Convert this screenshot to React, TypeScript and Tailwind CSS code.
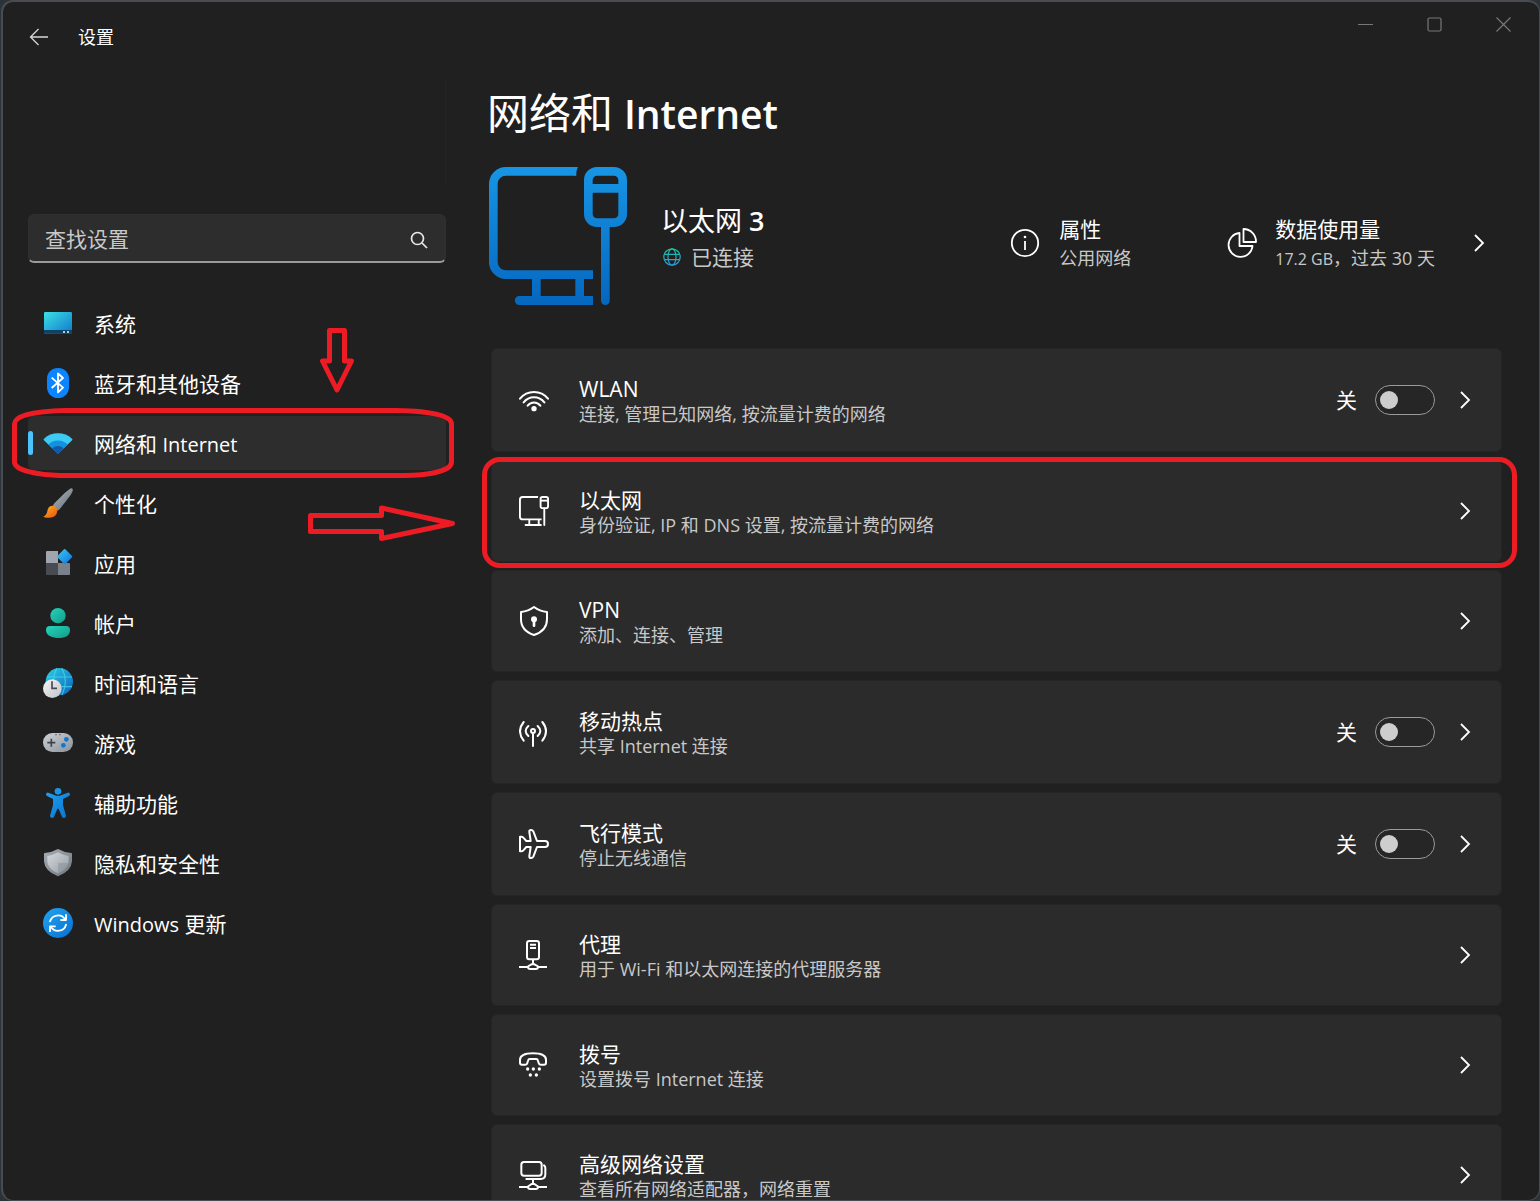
import React from "react";

type IconProps = { className?: string };

function EthernetIcon({ className, hero = false }: IconProps & { hero?: boolean }) {
  return (
    <svg className={className} viewBox="57 261 414 414" fill="none" stroke={hero ? "url(#ethernet)" : "currentColor"} strokeWidth="26" aria-hidden="true">
      {hero && (
        <defs>
          <linearGradient id="ethernet" gradientUnits="userSpaceOnUse" x1="57" y1="261" x2="57" y2="675">
            <stop offset="0" stopColor="#1795e4" />
            <stop offset="1" stopColor="#0567bf" />
          </linearGradient>
        </defs>
      )}
      <path d="M369 584H108a38 38 0 0 1-38-38V312a38 38 0 0 1 38-38H319" />
      <path d="M199 590V655M329 590V655" />
      <path fill={hero ? "url(#ethernet)" : "currentColor"} stroke="none" d="M369 648v27H148a13 13 0 0 1 0-27zM314 261h10q-7 12-7 26h-3z" />
      <path d="M406 435V662" strokeLinecap="round" />
      <rect x="355" y="274" width="103" height="154" rx="26" />
      <path d="M360 325H453" />
    </svg>
  );
}

function Chevron() {
  return (
    <svg className="h-5 w-5" viewBox="0 0 20 20" fill="none" stroke="currentColor" strokeWidth="1.8" aria-hidden="true">
      <path d="M6 2l8 8-8 8" />
    </svg>
  );
}

function Glyph({ box, children }: { box: string; children: React.ReactNode }) {
  return (
    <svg className="h-[30px] w-[30px] shrink-0" viewBox={box} fill="none" stroke="currentColor" strokeWidth="6" aria-hidden="true">
      {children}
    </svg>
  );
}

const wlanIcon = (
  <Glyph box="117 132 90 90">
    <circle cx="162" cy="203" r="8" fill="currentColor" stroke="none" />
    <path strokeLinecap="round" d="M120 173A54 54 0 0 1 204 173M131 184A39 39 0 0 1 193 184M143 194A24 24 0 0 1 181 194" />
  </Glyph>
);
const vpnIcon = (
  <Glyph box="117 798 90 90">
    <path strokeLinejoin="round" d="M162 801Q145 814 123 816V838C123 862 140 878 162 885C184 878 201 862 201 838V816Q179 814 162 801Z" />
    <circle cx="162" cy="838" r="9" fill="currentColor" stroke="none" />
    <path d="M162 840V857" strokeWidth="8" strokeLinecap="round" />
  </Glyph>
);
const hotspotIcon = (
  <Glyph box="117 111 90 90">
    <circle cx="159" cy="153" r="6" />
    <path strokeLinecap="round" d="M159 161V198M145 138Q129 153 145 168M173 138Q189 153 173 168M131 126Q109 153 131 182M187 126Q209 153 187 182" />
  </Glyph>
);
const planeIcon = (
  <Glyph box="117 447 90 90">
    <path strokeLinejoin="round" d="M171 483H195a9 9 0 0 1 0 18H171L160 530q-2 4-7 4q-6 0-5-6L152 501H139L130 511q-3 3-6 3h-4V470h4q3 0 6 3L139 483H152L148 456q-1-6 5-6q5 0 7 4Z" />
  </Glyph>
);
const proxyIcon = (
  <Glyph box="117 780 90 90">
    <rect x="141" y="783" width="36" height="55" rx="7" />
    <path d="M150 794H168M150 804H168M159 838V853M117 861H144M174 861H201" />
    <path d="M144 861q0 6 7 6h16q7 0 7-6q0-3-5-5l-6-3h-8l-6 3q-5 2-5 5Z" />
  </Glyph>
);
const dialIcon = (
  <Glyph box="117 120 90 90">
    <path strokeLinejoin="round" d="M120 150C120 136 138 130 159 130S198 136 198 150V158q0 6-6 6h-10q-5 0-6-5l-2-7q-1-5-6-5h-18q-5 0-6 5l-2 7q-1 5-6 5h-10q-6 0-6-6Z" />
    <g fill="currentColor" stroke="none">
      <circle cx="143" cy="177" r="5" />
      <circle cx="160" cy="177" r="5" />
      <circle cx="178" cy="177" r="5" />
      <circle cx="151" cy="195" r="5" />
      <circle cx="169" cy="195" r="5" />
    </g>
  </Glyph>
);
const advancedIcon = (
  <Glyph box="117 451 90 90">
    <rect x="124" y="457" width="61" height="41" rx="8" />
    <path strokeLinecap="round" d="M192 467q4 3 4 8V494q0 14-14 14H139" />
    <path d="M159 508V520M117 532H144M174 532H201" />
    <path d="M144 532q0 6 7 6h16q7 0 7-6q0-3-5-5l-6-4h-8l-6 4q-5 2-5 5Z" />
  </Glyph>
);

function Tile({ box, children }: { box: string; children: React.ReactNode }) {
  return (
    <svg className="h-[30px] w-[30px] shrink-0" viewBox={box} fill="none" aria-hidden="true">
      {children}
    </svg>
  );
}

function Gradient({ id, from, to }: { id: string; from: string; to: string }) {
  return (
    <linearGradient id={id} x1="0" y1="0" x2="1" y2="1">
      <stop offset="0" stopColor={from} />
      <stop offset="1" stopColor={to} />
    </linearGradient>
  );
}

const navItems: { key: string; label: React.ReactNode; icon: React.ReactNode }[] = [
  {
    key: "system",
    label: "系统",
    icon: (
      <Tile box="129 54 90 90">
        <Gradient id="sys" from="#3be0e6" to="#1077cb" />
        <rect x="132" y="66" width="84" height="65" rx="4" fill="url(#sys)" />
        <path d="M132 120h84v7q0 4-4 4h-76q-4 0-4-4z" fill="#0f4266" />
        <path d="M189 123h6v6h-6zM201 123h6v6h-6z" fill="#a9cde0" />
      </Tile>
    ),
  },
  {
    key: "bluetooth",
    label: "蓝牙和其他设备",
    icon: (
      <Tile box="129 234 90 90">
        <rect x="141" y="234" width="66" height="90" rx="32" fill="#0a84ff" />
        <path d="M155 263L189 293L174 307V250L189 264L155 294" stroke="#fff" strokeWidth="5.5" strokeLinejoin="round" />
      </Tile>
    ),
  },
  {
    key: "network",
    label: (
      <>
        网络和 <span className="text-xl leading-none">Internet</span>
      </>
    ),
    icon: (
      <Tile box="129 414 90 90">
        <path d="M174 491L131 450Q130 448 132 446A62 62 0 0 1 216 446Q218 448 217 450Z" fill="#3ccbf4" />
        <path d="M174 491L145 463A42 42 0 0 1 203 463Z" fill="#1590e0" />
        <path d="M174 491Q172 491 170 489L157 475A25 25 0 0 1 191 475L178 489Q176 491 174 491Z" fill="#0f5bab" />
      </Tile>
    ),
  },
  {
    key: "personalization",
    label: "个性化",
    icon: (
      <Tile box="39 54 90 90">
        <Gradient id="handle" from="#b4bcc6" to="#5f6871" />
        <Gradient id="bristle" from="#ffb724" to="#e9500f" />
        <path d="M119 57Q125 52 128 57Q130 63 122 75L89 118Q84 123 78 121L69 108Q70 102 74 99L105 68Z" fill="url(#handle)" />
        <path d="M40 140Q50 136 52 124Q54 107 68 107Q82 109 82 122Q80 143 58 143Q45 144 40 140Z" fill="url(#bristle)" />
      </Tile>
    ),
  },
  {
    key: "apps",
    label: "应用",
    icon: (
      <Tile box="39 234 90 90">
        <Gradient id="diamond" from="#3ccbf4" to="#0c70de" />
        <path d="M51 243h33v36H48v-33q0-3 3-3z" fill="#a0a6b0" />
        <path d="M48 279h36v36H51q-3 0-3-3z" fill="#484c52" />
        <path d="M84 279h33q3 0 3 3v30q0 3-3 3H84z" fill="#7a818b" />
        <path d="M102 238q2-2 4 0l20 20q2 2 0 4l-20 20q-2 2-4 0l-20-20q-2-2 0-4z" fill="url(#diamond)" />
      </Tile>
    ),
  },
  {
    key: "accounts",
    label: "帐户",
    icon: (
      <Tile box="39 414 90 90">
        <Gradient id="person" from="#27d3bd" to="#109c87" />
        <circle cx="84" cy="437" r="23" fill="url(#person)" />
        <path d="M48 480q0-12 12-12h48q12 0 12 12q0 24-36 24s-36 0-36-24z" fill="url(#person)" />
      </Tile>
    ),
  },
  {
    key: "time",
    label: "时间和语言",
    icon: (
      <Tile box="39 594 90 90">
        <Gradient id="earth" from="#2fd0e4" to="#0c62bd" />
        <Gradient id="clock" from="#f4f5f6" to="#bfc3c8" />
        <circle cx="88" cy="635" r="41" fill="url(#earth)" />
        <path d="M51 621H126M48 650H126M80 595Q60 635 80 675M96 595Q116 635 96 675" stroke="#48d8ee" strokeWidth="3.5" opacity=".75" />
        <circle cx="67" cy="656" r="28" fill="url(#clock)" />
        <path d="M66 634V655H81" stroke="#45494e" strokeWidth="5" />
      </Tile>
    ),
  },
  {
    key: "gaming",
    label: "游戏",
    icon: (
      <Tile box="39 54 90 90">
        <Gradient id="pad" from="#cfd3d8" to="#8a9199" />
        <rect x="39" y="69" width="90" height="57" rx="28" fill="url(#pad)" />
        <path d="M64 86V110M52 98H76" stroke="#3f444a" strokeWidth="5" />
        <circle cx="109" cy="88" r="7" fill="#0c78d4" />
        <circle cx="100" cy="106" r="7" fill="#0c78d4" />
        <path d="M76 72h4v4h-4zM88 72h4v4h-4z" fill="#565b61" />
      </Tile>
    ),
  },
  {
    key: "accessibility",
    label: "辅助功能",
    icon: (
      <Tile box="39 234 90 90">
        <Gradient id="figure" from="#1fa0ee" to="#0872d0" />
        <circle cx="84" cy="244" r="10" fill="#1995e6" />
        <path d="M55 248L75 256Q84 259 93 256L113 248Q119 247 120 253Q120 256 117 258L99 267V286L108 317Q108 323 103 324Q98 324 96 320L86 297Q84 294 82 297L72 320Q70 324 65 324Q60 323 60 317L69 286V267L51 258Q48 256 48 253Q49 247 55 248Z" fill="url(#figure)" />
      </Tile>
    ),
  },
  {
    key: "privacy",
    label: "隐私和安全性",
    icon: (
      <Tile box="39 414 90 90">
        <Gradient id="shield" from="#a7adb4" to="#70777f" />
        <Gradient id="plate" from="#d5d9dd" to="#959ca4" />
        <path d="M84 417Q104 428 124 429Q126 429 126 432V454Q124 484 84 499Q44 484 42 454V432Q42 429 44 429Q64 428 84 417Z" fill="url(#shield)" />
        <path d="M84 427Q100 436 116 438V456Q113 478 84 490Q55 478 52 456V438Q68 436 84 427Z" fill="url(#plate)" />
        <path d="M84 459H116Q112 480 84 490Z" fill="#7f868e" opacity=".4" />
      </Tile>
    ),
  },
  {
    key: "update",
    label: (
      <>
        <span className="text-xl leading-none">Windows</span> 更新
      </>
    ),
    icon: (
      <Tile box="39 594 90 90">
        <Gradient id="update" from="#1fa5f2" to="#0a6fd0" />
        <circle cx="84" cy="639" r="45" fill="url(#update)" />
        <path d="M60 634A25 25 0 0 1 105 628M108 644A25 25 0 0 1 63 651" stroke="#fff" strokeWidth="5.5" strokeLinecap="round" />
        <path d="M108 613V630H91M60 666V649H77" stroke="#fff" strokeWidth="5.5" strokeLinejoin="round" />
      </Tile>
    ),
  },
];

const cards = [
  { title: "WLAN", detail: "连接, 管理已知网络, 按流量计费的网络", icon: wlanIcon, toggle: true },
  { title: "以太网", detail: "身份验证, IP 和 DNS 设置, 按流量计费的网络", icon: <EthernetIcon className="h-[30px] w-[30px] shrink-0" />, marked: true },
  { title: "VPN", detail: "添加、连接、管理", icon: vpnIcon },
  { title: "移动热点", detail: "共享 Internet 连接", icon: hotspotIcon, toggle: true },
  { title: "飞行模式", detail: "停止无线通信", icon: planeIcon, toggle: true },
  { title: "代理", detail: "用于 Wi-Fi 和以太网连接的代理服务器", icon: proxyIcon },
  { title: "拨号", detail: "设置拨号 Internet 连接", icon: dialIcon },
  { title: "高级网络设置", detail: "查看所有网络适配器，网络重置", icon: advancedIcon },
];

function CardBody({ card }: { card: (typeof cards)[number] }) {
  return (
    <>
      {card.icon}
      <span className="min-w-0 flex-1 pt-[2px]">
        <span className="block text-[21px] leading-[26px]">{card.title}</span>
        <span className="block text-lg leading-6 text-[#c8c8c8]">{card.detail}</span>
      </span>
    </>
  );
}

function SettingCard({ card }: { card: (typeof cards)[number] }) {
  if (card.toggle) {
    return (
      <div className="flex h-[104px] shrink-0 items-center gap-[30px] rounded-md border border-[#252525] bg-[#2b2b2b] pr-[26px] pl-[27px]">
        <CardBody card={card} />
        <label className="flex items-center gap-[18px] text-[21px]">
          <span className="pt-[2px]">关</span>
          <input
            type="checkbox"
            role="switch"
            aria-label={card.title}
            className="flex h-[30px] w-[60px] appearance-none items-center rounded-full border-[1.5px] border-[#9a9a9a] bg-[#262626] px-1 before:h-[18px] before:w-[18px] before:rounded-full before:bg-[#cdcdcd] checked:justify-end"
          />
        </label>
        <button type="button" aria-label={"打开" + card.title} className="-ml-[10px]">
          <Chevron />
        </button>
      </div>
    );
  }
  return (
    <div className="relative shrink-0">
      <button type="button" className="flex h-[102px] w-full items-center gap-[30px] rounded-md border border-[#252525] bg-[#2b2b2b] pr-[26px] pl-[27px] text-left">
        <CardBody card={card} />
        <Chevron />
      </button>
      {card.marked && <div className="pointer-events-none absolute -top-[3px] -right-[15px] -bottom-[6px] -left-[9px] rounded-[18px] border-5 border-[#ed1c24]" />}
    </div>
  );
}

function Annotations() {
  return (
    <svg className="pointer-events-none absolute -top-[88px] -left-[18px] h-[220px] w-[450px]" viewBox="10 328 450 220" fill="none" stroke="#ed1c24" strokeWidth="5" strokeLinejoin="round" aria-hidden="true">
      <path d="M66 410.500H396C425 411 451.500 414 451.500 424V462C451.500 472 425 475.500 404 475.500H60C40 475 14.500 471 14.500 462V424C14.500 414 40 411 66 410.500Z" />
      <path d="M329.500 330.500H344.500V361H351.500L337 390L322.500 361H329.500Z" />
      <path d="M310.500 515.500H381.500V508L452.500 523.500L381.500 538.500V531.500H310.500Z" />
    </svg>
  );
}

export default function App() {
  return (
    <div className="h-screen overflow-hidden bg-[#2c3338] pl-px font-['Open_Sans','Noto_Sans_CJK_SC',sans-serif] text-white">
      <div className="flex h-full flex-col overflow-hidden rounded-xl border-2 border-r border-b border-[#484c50] bg-[#202020]">
        <header className="flex h-[78px] shrink-0 items-start pr-px">
          <div className="flex h-[70px] flex-1 items-center gap-[29px] pl-[26px]">
            <button type="button" aria-label="返回">
              <svg className="h-5 w-5" viewBox="0 0 20 20" fill="none" stroke="#d6d6d6" strokeWidth="1.3" aria-hidden="true">
                <path d="M19 10H1.500M9.500 2L1.500 10l8 8" />
              </svg>
            </button>
            <span className="text-lg">设置</span>
          </div>
          <div className="flex text-[#777]">
            {[
              { label: "最小化", shape: <path d="M0 7.500H15" /> },
              { label: "最大化", shape: <rect x="1" y="1" width="13" height="13" rx="1.500" /> },
              { label: "关闭", shape: <path d="M0.500 0.500l14 14M14.500 0.500l-14 14" /> },
            ].map((control) => (
              <button key={control.label} type="button" aria-label={control.label} className="flex h-[45px] w-[69px] items-center justify-center">
                <svg className="h-[15px] w-[15px]" viewBox="0 0 15 15" fill="none" stroke="currentColor" strokeWidth="1.200" aria-hidden="true">
                  {control.shape}
                </svg>
              </button>
            ))}
          </div>
        </header>

        <div className="flex min-h-0 flex-1">
          <aside className="z-10 w-[443px] shrink-0 pl-[25px]">
            <div className="h-[104px] border-r border-[#252525]" />
            <div className="mt-[30px] flex h-[49px] items-center rounded-md border border-b-2 border-[#303030] border-b-[#9a9a9a] bg-[#2d2d2d] pt-[3px] pr-[17px] pl-4">
              <input type="text" aria-label="查找设置" placeholder="查找设置" className="min-w-0 flex-1 bg-transparent text-[21px] outline-none placeholder:text-[#c8c8c8]" />
              <svg className="h-[18px] w-[18px]" viewBox="0 0 18 18" fill="none" stroke="#e8e8e8" strokeWidth="1.700" aria-hidden="true">
                <circle cx="7.500" cy="7.500" r="6" />
                <path d="M12 12l5 5" />
              </svg>
            </div>
            <nav className="mt-[33px] flex flex-col gap-[6px]">
              {navItems.map((item) => {
                const current = item.key === "network";
                return (
                  <div key={item.key} className="relative">
                    <a
                      href="#"
                      aria-current={current ? "page" : undefined}
                      className="flex h-[54px] items-center gap-[21px] rounded-md pl-[15px] text-[21px] aria-[current=page]:bg-[#2d2d2d]"
                    >
                      {item.icon}
                      <span className="pt-1">{item.label}</span>
                    </a>
                    {current && (
                      <>
                        <span className="absolute top-[15px] left-0 h-6 w-[5px] rounded-full bg-[#4cc2ff]" />
                        <Annotations />
                      </>
                    )}
                  </div>
                );
              })}
            </nav>
          </aside>

          <main className="flex min-w-0 flex-1 flex-col overflow-hidden pr-[37px] pl-[37px]">
            <h1 className="mt-[3px] ml-1 h-[60px] shrink-0 text-[42px] leading-[60px] font-semibold">
              <span className="font-normal">网络和</span> <span className="text-[39px] leading-none">Internet</span>
            </h1>
            <section className="mt-6 ml-[6px] flex h-[138px] shrink-0 items-center">
              <EthernetIcon hero className="h-[138px] w-[138px] shrink-0" />
              <div className="ml-[34px] pt-[2px]">
                <h2 className="text-[27px] leading-10 font-semibold">
                  <span className="font-normal">以太网</span> 3
                </h2>
                <p className="flex items-center gap-[10px] text-[21px] leading-8 text-[#c8c8c8]">
                  <svg className="ml-[2px] h-[18px] w-[18px]" viewBox="0 0 18 18" fill="none" stroke="url(#globe)" strokeWidth="1.200" aria-hidden="true">
                    <linearGradient id="globe" gradientUnits="userSpaceOnUse" x1="0" y1="0" x2="0" y2="18">
                      <stop offset="0" stopColor="#1fc79d" />
                      <stop offset="1" stopColor="#2a96e0" />
                    </linearGradient>
                    <circle cx="9" cy="9" r="8.200" />
                    <ellipse cx="9" cy="9" rx="4" ry="8.200" />
                    <path d="M1.500 6.300h15M1.500 11.700h15" />
                  </svg>
                  已连接
                </p>
              </div>
              <div className="ml-auto flex items-center pt-[13px]">
                <button type="button" className="flex items-center gap-[19px] text-left">
                  <svg className="h-[30px] w-[30px]" viewBox="0 0 30 30" fill="none" stroke="currentColor" strokeWidth="1.800" aria-hidden="true">
                    <circle cx="15" cy="15" r="13.200" />
                    <path d="M15 13v9" />
                    <circle cx="15" cy="9" r="1.300" fill="currentColor" stroke="none" />
                  </svg>
                  <span>
                    <span className="block text-[21px] leading-[30px]">属性</span>
                    <span className="block text-lg leading-7 text-[#c8c8c8]">公用网络</span>
                  </span>
                </button>
                <button type="button" className="ml-24 flex items-center gap-[18px] text-left">
                  <svg className="h-[30px] w-[30px]" viewBox="0 0 30 30" fill="none" stroke="currentColor" strokeWidth="1.800" strokeLinejoin="round" aria-hidden="true">
                    <path d="M12.500 5A12 12 0 1 0 25.500 18H12.500Z" />
                    <path d="M16.500 1A12.500 12.500 0 0 1 29 14H16.500Z" />
                  </svg>
                  <span>
                    <span className="block text-[21px] leading-[30px]">数据使用量</span>
                    <span className="block text-lg leading-7 text-[#c8c8c8]">
                      <span className="text-base leading-none">17.2 GB</span>，过去 30 天
                    </span>
                  </span>
                  <span className="mr-[13px] ml-4">
                    <Chevron />
                  </span>
                </button>
              </div>
            </section>
            <div className="mt-[43px] flex flex-col gap-2 pl-2">
              {cards.map((card) => (
                <SettingCard key={card.title} card={card} />
              ))}
            </div>
          </main>
        </div>
      </div>
    </div>
  );
}
